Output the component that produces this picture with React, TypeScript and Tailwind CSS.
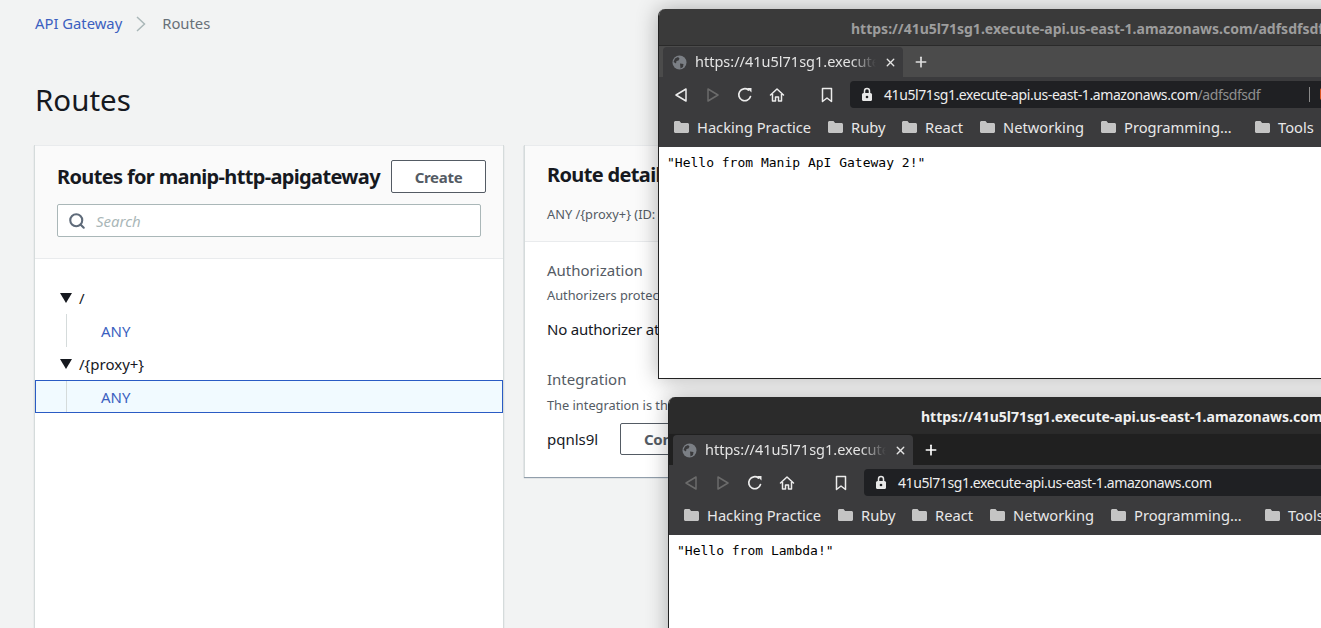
import React from 'react';
import { Search, Plus, X } from 'lucide-react';

const ember = { fontFamily: '"Noto Sans", sans-serif' };

const bookmarks = [
  { label: 'Hacking Practice', cls: 'w-[114px]' },
  { label: 'Ruby', cls: 'w-[34px]' },
  { label: 'React', cls: 'w-[38px]' },
  { label: 'Networking', cls: 'w-[81px]' },
  { label: 'Programming…', cls: 'w-[114px]' },
  { label: 'Tools', cls: 'w-[38px]' },
];

const Folder = () => (
  <svg width="15" height="14" viewBox="0 0 15 14" className="shrink-0">
    <path d="M1.500 1h4l1.600 2h6.400c.8 0 1.500.7 1.500 1.500v7c0 .8-.7 1.500-1.500 1.500h-12C.7 13 0 12.300 0 11.500v-9C0 1.700.7 1 1.500 1z" fill="#c4c4c4" />
  </svg>
);

const Globe = () => (
  <svg width="15" height="15" viewBox="0 0 15 15" className="shrink-0">
    <circle cx="7.500" cy="7.500" r="7" fill="#7b7f85" />
    <path d="M3 3.500l3-1.500 1.500 1.500-1 2-2 .5-.5 2.500L1.500 7zM8 8.500l3.500.5-.5 3-2.500 1.500z" fill="#3a3a3c" />
  </svg>
);

const Lock = () => (
  <svg width="12" height="15" viewBox="0 0 12 15" className="shrink-0">
    <path d="M3.500 6V4a2.500 2.500 0 0 1 5 0v2" fill="none" stroke="#e8e8e8" strokeWidth="1.500" />
    <rect x="1" y="6" width="10" height="8" rx="1.500" fill="#e8e8e8" />
    <circle cx="6" cy="10" r="1.300" fill="#202124" />
  </svg>
);

const NavIcons = ({ backDim, bookmarkGap }: { backDim: boolean; bookmarkGap: string }) => (
  <>
    <svg width="14" height="16" viewBox="0 0 14 16" className="shrink-0">
      <path d="M12 2L2 8l10 6z" fill="none" stroke={backDim ? '#6b6b6b' : '#ececec'} strokeWidth="1.500" strokeLinejoin="round" />
    </svg>
    <svg width="14" height="16" viewBox="0 0 14 16" className="ml-[18px] shrink-0">
      <path d="M2 2l10 6-10 6z" fill="none" stroke="#6b6b6b" strokeWidth="1.500" strokeLinejoin="round" />
    </svg>
    <svg width="16" height="16" viewBox="0 0 16 16" className="ml-[17px] shrink-0">
      <path d="M13.500 9.500A6 6 0 1 1 11.500 3" fill="none" stroke="#ececec" strokeWidth="1.700" strokeLinecap="round" />
      <path d="M10 1h4.500v4.500z" fill="#ececec" />
    </svg>
    <svg width="16" height="16" viewBox="0 0 16 16" className="ml-4 shrink-0">
      <path d="M1.500 8L8 2l6.500 6M3.500 7v7h3v-4h3v4h3V7" fill="none" stroke="#ececec" strokeWidth="1.500" strokeLinejoin="round" strokeLinecap="round" />
    </svg>
    <svg width="12" height="16" viewBox="0 0 12 16" className={`shrink-0 ${bookmarkGap}`}>
      <path d="M1.500 1.500h9v13L6 11l-4.500 3.500z" fill="none" stroke="#ececec" strokeWidth="1.500" strokeLinejoin="round" />
    </svg>
  </>
);

interface WindowProps {
  position: string;
  titleBar: string;
  titleText: string;
  titleIndent: string;
  title: string;
  tabStrip: string;
  plusColor: string;
  backDim: boolean;
  bookmarkGap: string;
  url: React.ReactNode;
  trailing?: React.ReactNode;
  message: string;
}

const BrowserWindow = ({ position, titleBar, titleText, titleIndent, title, tabStrip, plusColor, backDim, bookmarkGap, url, trailing, message }: WindowProps) => (
  <div className={`absolute flex flex-col rounded-t-[7px] overflow-hidden border-l border-[#222] shadow-[0_0_22px_rgba(0,0,0,0.3)] ${position}`} style={ember}>
    <div className={`h-[37px] shrink-0 flex items-center pt-[2px] border-b border-[#2a2a2a] ${titleBar} ${titleIndent}`}>
      <span className={`whitespace-nowrap text-[14px] font-bold ${titleText}`}>{title}</span>
    </div>
    <div className={`h-[31px] shrink-0 flex items-end pl-[4px] ${tabStrip}`}>
      <div className="w-[240px] h-[30px] bg-[#3b3b3d] rounded-t-[4px] flex items-center pl-[9px] pr-[6px] shrink-0">
        <Globe />
        <span className="ml-[8px] w-[181px] overflow-hidden whitespace-nowrap text-[14.500px] text-[#e4e4e4] [mask-image:linear-gradient(to_right,black_86%,transparent)]">
          https://41u5l71sg1.execute-api.us-east-1.amazonaws.com
        </span>
        <X size={13} strokeWidth={2.500} className="ml-auto text-[#e4e4e4]" />
      </div>
      <div className="h-[30px] flex items-center ml-[10px]">
        <Plus size={16} strokeWidth={2.500} className={plusColor} />
      </div>
    </div>
    <div className="h-[35px] shrink-0 bg-[#3b3b3d] flex items-center pl-[15px]">
      <NavIcons backDim={backDim} bookmarkGap={bookmarkGap} />
      <div className="relative ml-[17px] w-[640px] h-[27px] rounded-[4px] bg-[#1f2023] flex items-center pl-[11px] shrink-0">
        <Lock />
        {url}
        {trailing}
      </div>
    </div>
    <div className="h-[35px] shrink-0 bg-[#3b3b3d] flex items-center pb-[5px] pl-[15px] gap-[17px]">
      {bookmarks.map((b) => (
        <div key={b.label} className="flex items-center gap-[8px] shrink-0">
          <Folder />
          <span className={`text-[14.700px] whitespace-nowrap text-[#e8e8e8] ${b.cls}`}>{b.label}</span>
        </div>
      ))}
    </div>
    <div className="flex-1 bg-white px-[8px] pt-[7px]">
      <p className="text-[13px] leading-[17px] text-black whitespace-nowrap" style={{ fontFamily: '"DejaVu Sans Mono", monospace' }}>{message}</p>
    </div>
  </div>
);

const App: React.FC = () => {
  return (
    <div className="relative w-[1321px] h-[628px] overflow-hidden bg-[#f2f3f3]" style={ember}>
      <div className="pl-[34px]">
        <div className="h-[47px] pl-px flex items-center text-[14.800px]">
          <span className="text-[#3b5fc0]">API Gateway</span>
          <svg width="12" height="18" viewBox="0 0 12 18" className="ml-[13px]">
            <path d="M2 2l7.500 7L2 16" fill="none" stroke="#aab7b8" strokeWidth="1.500" />
          </svg>
          <span className="ml-[15px] text-[#687078]">Routes</span>
        </div>
        <h1 className="mt-[30px] pl-px h-[45px] text-[29.500px] leading-[45px] text-[#16191f]">Routes</h1>
        <div className="mt-[23px] flex items-start gap-[20px]">
          <div className="w-[470px] h-[500px] shrink-0 bg-white border-x border-[#d5dbdb] shadow-[0_1px_1px_rgba(0,31,63,0.2)]">
            <div className="h-[114px] bg-[#fafafa] border-y border-[#e9ebed] pl-[22px] pr-[17px]">
              <div className="flex items-center justify-between mt-[14px]">
                <h2 className="text-[20px] font-bold text-[#16191f] whitespace-nowrap tracking-[-0.65px]">Routes for manip-http-apigateway</h2>
                <button className="w-[95px] h-[33px] pt-px rounded-[2px] border border-[#545b64] bg-white text-[15px] font-bold tracking-[-0.3px] text-[#545b64]">Create</button>
              </div>
              <div className="mt-[11px] w-[424px] h-[33px] rounded-[2px] bg-white border border-[#aab7b8] flex items-center pl-[10px]">
                <Search size={18} strokeWidth={2.800} className="text-[#5f6b7a]" />
                <span className="ml-[10px] mt-[2px] text-[15px] italic text-[#aab7b8]">Search</span>
              </div>
            </div>
            <div className="pt-[22px]">
              <div className="h-[33px] flex items-center pl-[25px]">
                <svg width="12" height="10" viewBox="0 0 12 10"><path d="M0 0h12L6 10z" fill="#16191f" /></svg>
                <span className="ml-[7px] mt-[2px] text-[15px] text-[#16191f]">/</span>
              </div>
              <div className="h-[33px] flex items-center pl-[31px]">
                <div className="w-px h-full bg-[#d5dbdb]" />
                <span className="ml-[34px] mt-[2px] text-[15px] text-[#3b5fc0]">ANY</span>
              </div>
              <div className="h-[33px] flex items-center pl-[25px]">
                <svg width="12" height="10" viewBox="0 0 12 10"><path d="M0 0h12L6 10z" fill="#16191f" /></svg>
                <span className="ml-[7px] mt-[2px] text-[15px] text-[#16191f]">/{'{'}proxy+{'}'}</span>
              </div>
              <div className="h-[33px] flex items-center pl-[30px] bg-[#f1faff] border border-[#2a5bc4]">
                <div className="w-px h-full bg-[#d5dbdb]" />
                <span className="ml-[34px] mt-[2px] text-[15px] text-[#3b5fc0]">ANY</span>
              </div>
            </div>
          </div>
          <div className="w-[800px] h-[332px] shrink-0 bg-white border-l border-[#d5dbdb] shadow-[0_1px_1px_rgba(0,31,63,0.4)]">
            <div className="h-[97px] bg-[#fafafa] border-y border-[#e9ebed] pl-[22px] pt-[14px]">
              <h2 className="text-[20px] font-bold text-[#16191f] tracking-[-0.65px]">Route details</h2>
              <p className="mt-[15px] text-[12.800px] text-[#545b64]">ANY /{'{'}proxy+{'}'} (ID: abc123)</p>
            </div>
            <div className="pl-[22px] pt-[18px]">
              <h3 className="text-[15px] leading-[20px] text-[#545b64]">Authorization</h3>
              <p className="mt-[7px] text-[12.800px] leading-[16px] text-[#545b64]">Authorizers protect your route</p>
              <p className="mt-[16px] text-[15px] tracking-[-0.2px] leading-[20px] text-[#16191f]">No authorizer attached</p>
              <h3 className="mt-[30px] text-[15px] leading-[20px] text-[#545b64]">Integration</h3>
              <p className="mt-[8px] text-[12.800px] leading-[16px] text-[#545b64]">The integration is the backend</p>
              <div className="mt-[10px] flex items-center">
                <span className="w-[73px] text-[15px] text-[#16191f]">pqnls9l</span>
                <button className="w-[120px] h-[32px] rounded-[2px] border border-[#545b64] bg-white text-left pl-[23px] text-[15px] font-bold tracking-[-0.3px] text-[#545b64]">Configure</button>
              </div>
            </div>
          </div>
        </div>
      </div>
      <BrowserWindow
        position="left-[658px] top-[9px] w-[700px] h-[370px] border-b"
        titleBar="bg-[#3a3a3a]"
        titleText="text-[#9d9d9d]"
        titleIndent="pl-[192px]"
        title="https://41u5l71sg1.execute-api.us-east-1.amazonaws.com/adfsdfsdf"
        tabStrip="bg-[#4b4b4b]"
        plusColor="text-[#e0e0e0]"
        backDim={false}
        bookmarkGap="ml-[36px]"
        url={
          <span className="ml-[11px] text-[14px] tracking-[-0.41px] whitespace-nowrap text-[#eeeeee]">
            41u5l71sg1.execute-api.us-east-1.amazonaws.com<span className="text-[#8f8f8f]">/adfsdfsdf</span>
          </span>
        }
        trailing={
          <>
            <div className="absolute left-[459px] top-[6px] w-px h-[15px] bg-[#8a8a8a]" />
            <div className="absolute left-[470px] top-[7px] w-[3px] h-[12px] rounded-l-[2px] bg-[#d9541e]" />
          </>
        }
        message={'"Hello from Manip ApI Gateway 2!"'}
      />
      <BrowserWindow
        position="left-[668px] top-[397px] w-[700px] h-[260px]"
        titleBar="bg-[#2b2b2b]"
        titleText="text-[#f0f0f0]"
        titleIndent="pl-[252px]"
        title="https://41u5l71sg1.execute-api.us-east-1.amazonaws.com"
        tabStrip="bg-[#202020]"
        plusColor="text-white"
        backDim={true}
        bookmarkGap="ml-[40px]"
        url={<span className="ml-[11px] text-[14px] tracking-[-0.41px] whitespace-nowrap text-[#eeeeee]">41u5l71sg1.execute-api.us-east-1.amazonaws.com</span>}
        message={'"Hello from Lambda!"'}
      />
    </div>
  );
};

export default App;
